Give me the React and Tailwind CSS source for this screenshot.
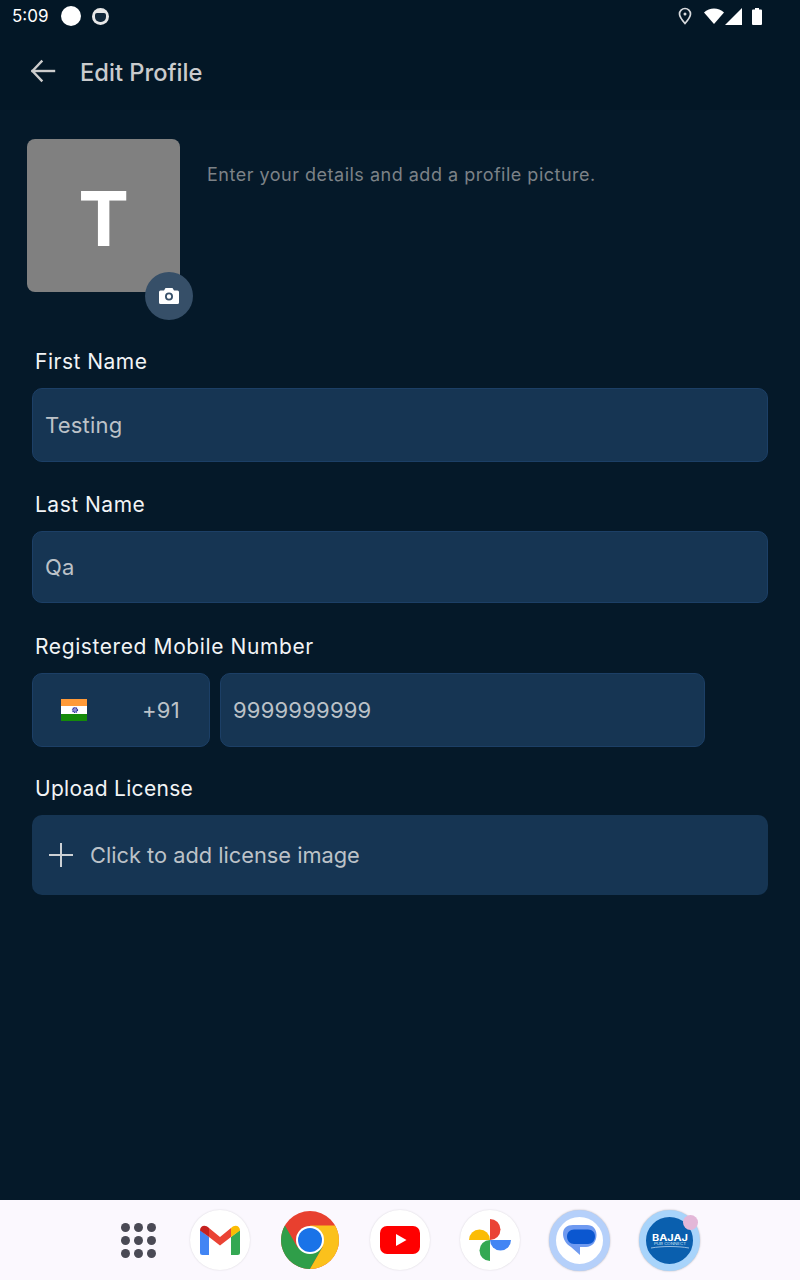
import React from "react";

const font = { fontFamily: "Inter, 'Liberation Sans', sans-serif" };

function Arrow() {
  return (
    <svg width="28" height="28" viewBox="0 0 28 28" fill="none" stroke="#cccccc" strokeWidth="2.400" strokeLinecap="square">
      <path d="M3.500 14H25" />
      <path d="M12.500 4.500L3.500 14L12.500 23.500" />
    </svg>
  );
}

function Field({ label, value, className = "", height = "h-[74px]" }) {
  return (
    <div className={className}>
      <div className="px-[3px] text-[21px] leading-[30px] tracking-[0.5px] text-[#f2f4f6]">{label}</div>
      <div className={`mt-[11px] flex items-center rounded-[10px] border border-[#1c3f66] bg-[#163553] px-[12px] text-[22px] tracking-[0.2px] text-[#bcc2c8] ${height}`}>
        {value}
      </div>
    </div>
  );
}

function Flag() {
  return (
    <svg width="26" height="22" viewBox="0 0 26 22" shapeRendering="crispEdges">
      <rect width="26" height="7" fill="#ff9a38" />
      <rect y="7" width="26" height="8" fill="#ffffff" />
      <rect y="15" width="26" height="7" fill="#158a0a" />
      <circle cx="14" cy="11" r="2.400" fill="#8f8fd0" stroke="#2a2a9c" strokeWidth="1.400" strokeDasharray="1 0.600" shapeRendering="auto" />
    </svg>
  );
}

function DockCircle({ children }) {
  return (
    <div className="flex h-[60px] w-[60px] items-center justify-center rounded-full bg-white shadow-[0_0_2px_rgba(0,0,0,0.15)]">
      {children}
    </div>
  );
}

function Gmail() {
  return (
    <svg width="40" height="30" viewBox="0 0 40 30">
      <path d="M0 5v22.500a2.500 2.500 0 0 0 2.500 2.500H9V12z" fill="#4285f4" />
      <path d="M31 12v18h6.500A2.500 2.500 0 0 0 40 27.500V5z" fill="#34a853" />
      <path d="M9 3L20 12L31 3V12L20 20.500L9 12z" fill="#ea4335" />
      <path d="M0 5.500C0 1 5 -1 9 3V12L0 5.500z" fill="#c5221f" />
      <path d="M31 3C35 -1 40 1 40 5.500L31 12z" fill="#fbbc04" />
    </svg>
  );
}

function Chrome() {
  return (
    <svg width="58" height="58" viewBox="0 0 58 58">
      <circle cx="29" cy="29" r="29" fill="#e8402f" />
      <path d="M3.900 14.500L16.400 36.300H41.500L29 58A29 29 0 0 1 3.900 14.500z" fill="#2f9e49" />
      <path d="M29 14.500H54.100A29 29 0 0 1 29 58L41.500 36.300z" fill="#fbc11c" />
      <circle cx="29" cy="29" r="14" fill="#ffffff" />
      <circle cx="29" cy="29" r="12" fill="#1a73e8" />
    </svg>
  );
}

function Youtube() {
  return (
    <svg width="40" height="28" viewBox="0 0 40 28">
      <rect width="40" height="28" rx="7" fill="#ff0000" />
      <path d="M16 8L26.500 14L16 20z" fill="#ffffff" />
    </svg>
  );
}

function Photos() {
  return (
    <svg width="42" height="42" viewBox="0 0 42 42">
      <path d="M21 21V0A10.500 10.500 0 0 1 21 21z" fill="#ea4335" />
      <path d="M21 21H42A10.500 10.500 0 0 1 21 21z" fill="#4285f4" />
      <path d="M21 21V42A10.500 10.500 0 0 1 21 21z" fill="#34a853" />
      <path d="M21 21H0A10.500 10.500 0 0 1 21 21z" fill="#fbbc04" />
    </svg>
  );
}

function Messages() {
  return (
    <svg width="34" height="32" viewBox="0 0 34 32">
      <path d="M10 1H24C30 1 33.500 5 33.500 11C33.500 18 29 23 23 23H17V31L8 23C3 20 0 15 0 10C0 4 4 1 10 1z" fill="#6f9af0" />
      <path d="M11 5.500H25C29.500 5.500 32 8.500 32 12.500C32 17 29 20 25 20H11C7 20 4 17 4 12.500C4 8.500 7 5.500 11 5.500z" fill="#0b57d0" />
    </svg>
  );
}

export default function App() {
  return (
    <div style={font} className="flex h-[1280px] w-[800px] flex-col overflow-hidden bg-[#051929]">
      <div className="h-[110px] shrink-0 bg-[#031726]">
        <div className="flex h-[32px] items-center justify-between pl-[12px] pr-[38px]">
          <div className="flex items-center">
            <span className="text-[17px] leading-none text-white">5:09</span>
            <span className="ml-[12px] h-[20px] w-[20px] rounded-full bg-white" />
            <span className="ml-[11px] flex h-[17px] w-[17px] items-center justify-center rounded-full bg-[#e8e8e8]">
              <span className="mt-[2px] h-[9px] w-[11px] rounded-b-[5px] rounded-t-[2px] bg-[#12283a]" />
            </span>
          </div>
          <div className="flex items-center">
            <svg width="16" height="18" viewBox="0 0 16 18" fill="none" stroke="#d8dadd" strokeWidth="1.700">
              <path d="M8 16.500C5 13 2.500 10 2.500 7A5.500 5.500 0 0 1 13.500 7C13.500 10 11 13 8 16.500z" />
              <circle cx="8" cy="7" r="1.500" fill="#d8dadd" stroke="none" />
            </svg>
            <svg className="ml-[11px]" width="20" height="16" viewBox="0 0 20 16">
              <path d="M0 4.500C5.500 -1 14.500 -1 20 4.500L10 16z" fill="#ffffff" />
            </svg>
            <svg className="ml-[1px]" width="17" height="17" viewBox="0 0 17 17">
              <path d="M17 0V17H0z" fill="#ffffff" />
            </svg>
            <svg className="ml-[10px]" width="10" height="17" viewBox="0 0 10 17">
              <path d="M3 0H7V1.500H9A1 1 0 0 1 10 2.500V16A1 1 0 0 1 9 17H1A1 1 0 0 1 0 16V2.500A1 1 0 0 1 1 1.500H3z" fill="#ffffff" />
            </svg>
          </div>
        </div>
        <div className="flex h-[78px] items-center pl-[29px]">
          <Arrow />
          <h1 className="ml-[23px] mt-[3px] text-[23.700px] font-medium leading-none text-[#c9cbcd]">Edit Profile</h1>
        </div>
      </div>

      <div className="flex-1 px-[32px]">
        <div className="-ml-[5px] mt-[29px] flex">
          <div className="relative h-[153px] w-[153px] shrink-0 rounded-[8px] bg-[#808080]">
            <div className="flex h-full items-center justify-center pt-[4px] text-[76px] font-bold leading-none text-white">T</div>
            <div className="absolute -bottom-[28px] -right-[13px] flex h-[48px] w-[48px] items-center justify-center rounded-full bg-[#364f68]">
              <svg width="20" height="16" viewBox="0 0 20 16">
                <path fillRule="evenodd" d="M6.500 0H13.500L15 2.500H18.500A1.500 1.500 0 0 1 20 4V14.500A1.500 1.500 0 0 1 18.500 16H1.500A1.500 1.500 0 0 1 0 14.500V4A1.500 1.500 0 0 1 1.500 2.500H5zM10 4.500A4 4 0 1 0 10 12.500A4 4 0 0 0 10 4.500zM10 6.300A2.200 2.200 0 1 1 10 10.700A2.200 2.200 0 0 1 10 6.300z" fill="#ffffff" />
              </svg>
            </div>
          </div>
          <p className="ml-[27px] mt-[23px] text-[18px] leading-[26px] tracking-[0.5px] text-[#7c8287]">
            Enter your details and add a profile picture.
          </p>
        </div>

        <Field className="mt-[55px]" label="First Name" value="Testing" />
        <Field className="mt-[28px]" label="Last Name" value="Qa" height="h-[72px]" />

        <div className="mt-[29px]">
          <div className="px-[3px] text-[21px] leading-[30px] tracking-[0.6px] text-[#f2f4f6]">Registered Mobile Number</div>
          <div className="mt-[11px] flex gap-[10px]">
            <div className="flex h-[74px] w-[178px] items-center justify-between rounded-[10px] border border-[#1c3f66] bg-[#163553] pl-[28px] pr-[28px] text-[22px] tracking-[0.3px] text-[#bcc2c8]">
              <Flag />
              <span className="-ml-[2px] mr-[1px]">+91</span>
            </div>
            <div className="flex h-[74px] w-[485px] items-center rounded-[10px] border border-[#1c3f66] bg-[#163553] px-[12px] text-[22px] tracking-[0.2px] text-[#bcc2c8]">
              9999999999
            </div>
          </div>
        </div>

        <div className="mt-[27px]">
          <div className="px-[3px] text-[21px] leading-[30px] tracking-[0.3px] text-[#f2f4f6]">Upload License</div>
          <div className="mt-[11px] flex h-[80px] items-center rounded-[10px] bg-[#163553] pl-[16px] text-[21.800px] text-[#bcc2c8]">
            <svg width="26" height="26" viewBox="0 0 26 26" stroke="#cdd1d5" strokeWidth="2">
              <path d="M13 1V25M1 13H25" />
            </svg>
            <span className="ml-[16px]">Click to add license image</span>
          </div>
        </div>
      </div>

      <div className="flex h-[80px] shrink-0 items-center bg-[#fbf8fe] pl-[121px]">
        <div className="grid w-[35px] grid-cols-3 gap-[4px]">
          {[0, 1, 2, 3, 4, 5, 6, 7, 8].map((i) => (
            <span key={i} className="h-[9px] w-[9px] rounded-full bg-[#4a4a55]" />
          ))}
        </div>
        <div className="ml-[34px]"><DockCircle><Gmail /></DockCircle></div>
        <div className="ml-[31px] flex h-[58px] w-[58px] items-center justify-center"><Chrome /></div>
        <div className="ml-[31px]"><DockCircle><Youtube /></DockCircle></div>
        <div className="ml-[30px]"><DockCircle><Photos /></DockCircle></div>
        <div className="ml-[29px]">
          <div className="flex h-[61px] w-[61px] items-center justify-center rounded-full border-[7.500px] border-[#b5d0fa] bg-white shadow-[0_0_2px_rgba(0,0,0,0.3)]">
            <Messages />
          </div>
        </div>
        <div className="relative ml-[29px]">
          <div className="flex h-[61px] w-[61px] items-center justify-center rounded-full border-[7.500px] border-[#a8d4fb] bg-[#0a5fae] shadow-[0_0_2px_rgba(0,0,0,0.3)]">
            <svg width="46" height="26" viewBox="0 0 46 26">
              <text x="23" y="14" textAnchor="middle" fontSize="8.300" fontWeight="700" fontFamily="Inter, sans-serif" fill="#ffffff" textLength="36" lengthAdjust="spacingAndGlyphs">BAJAJ</text>
              <text x="23" y="18" textAnchor="middle" fontSize="3" fontFamily="Inter, sans-serif" fill="#cfe3f5" textLength="32" lengthAdjust="spacingAndGlyphs">PUB CONNECT</text>
              <path d="M4 21C15 19 31 19 42 21" stroke="#cfe3f5" strokeWidth="0.700" fill="none" />
            </svg>
          </div>
          <span className="absolute right-[2px] top-[5px] h-[15px] w-[15px] rounded-full bg-[#e3b7d8]" />
        </div>
      </div>
    </div>
  );
}
